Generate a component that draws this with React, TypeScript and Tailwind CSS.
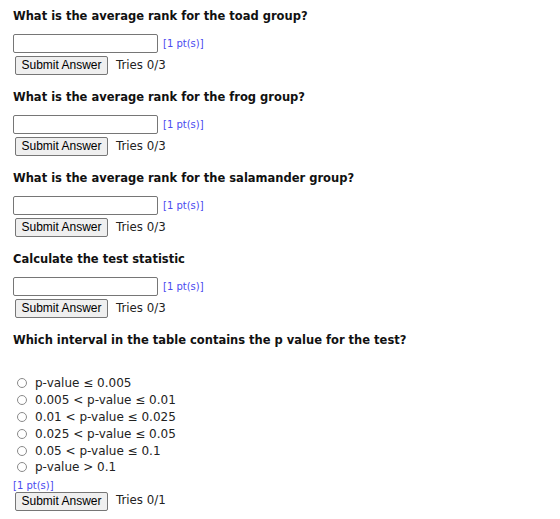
const questions = [
  "What is the average rank for the toad group?",
  "What is the average rank for the frog group?",
  "What is the average rank for the salamander group?",
  "Calculate the test statistic",
];

const choices = [
  "p-value ≤ 0.005",
  "0.005 < p-value ≤ 0.01",
  "0.01 < p-value ≤ 0.025",
  "0.025 < p-value ≤ 0.05",
  "0.05 < p-value ≤ 0.1",
  "p-value > 0.1",
];

const verdana = "font-['DejaVu_Sans',Verdana,sans-serif]";

const SubmitRow = ({ tries }: { tries: string }) => (
  <div className="flex items-center h-[19px] mt-[3px]">
    <button className="ml-[2px] h-[19px] w-[93px] pb-[1px] bg-[#efefef] border border-[#767676] rounded-[2px] text-[12px] text-black font-['Liberation_Sans',Arial,sans-serif] leading-none">
      Submit Answer
    </button>
    <span className={`ml-[8px] text-[11.8px] text-[#222] ${verdana}`}>{tries}</span>
  </div>
);

const Points = () => (
  <span className={`text-[10px] text-[#4a4af0] ${verdana}`}>[1 pt(s)]</span>
);

const Heading = ({ children }: { children: string }) => (
  <h3 className={`h-[16px] leading-[16px] text-[11.5px] font-bold text-[#111] ${verdana}`}>{children}</h3>
);

const App = () => {
  return (
    <div className="w-[560px] h-[519px] bg-white pl-[13px] pt-[8px] overflow-hidden">
      {questions.map((q) => (
        <div key={q} className="mb-[14px]">
          <Heading>{q}</Heading>
          <div className="flex items-center gap-[5px] mt-[10px]">
            <input type="text" className="w-[145px] h-[19px] border border-[#767676] rounded-[2px] bg-white" />
            <Points />
          </div>
          <SubmitRow tries="Tries 0/3" />
        </div>
      ))}
      <div className="mt-[1px]">
        <Heading>Which interval in the table contains the p value for the test?</Heading>
      </div>
      <div className="mt-[27px] flex flex-col">
        {choices.map((c) => (
          <label key={c} className="flex items-center h-[16.8px]">
            <span className="ml-[4px] w-[10px] h-[10px] rounded-full border border-[#8a8a8a] bg-white" />
            <span className={`ml-[8px] text-[12px] text-[#222] ${verdana}`}>{c}</span>
          </label>
        ))}
      </div>
      <div className="h-[12px] leading-[12px] mt-[1px]">
        <Points />
      </div>
      <SubmitRow tries="Tries 0/1" />
    </div>
  );
};

export default App;
